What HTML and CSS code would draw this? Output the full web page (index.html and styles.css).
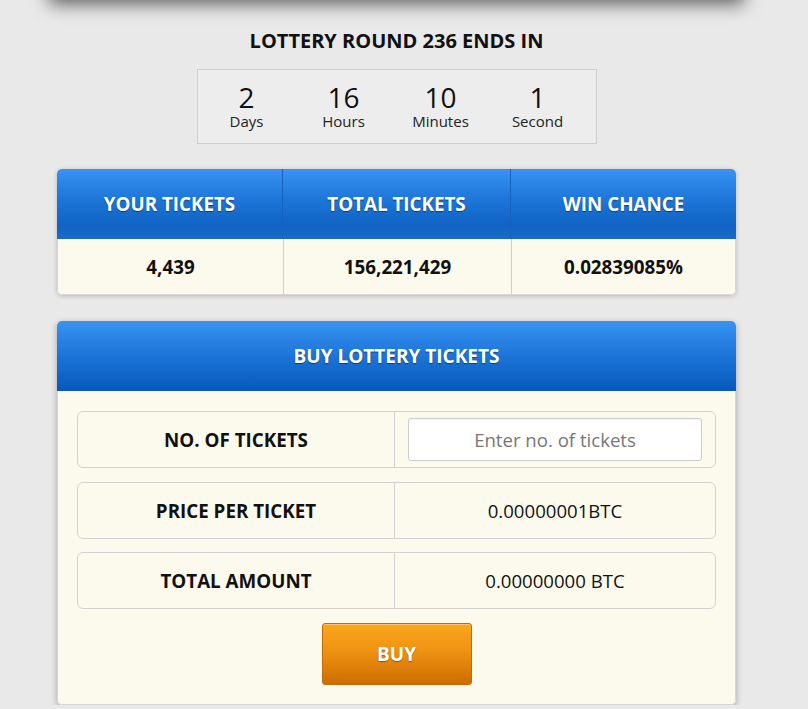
FILE: index.html
```html
<!DOCTYPE html>
<html>
<head>
<meta charset="utf-8">
<link rel="stylesheet" href="styles.css">
</head>
<body>
<div class="page">
  <div class="top-panel"></div>
  <h2 class="round-title">LOTTERY ROUND 236 ENDS IN</h2>
  <div class="countdown">
    <div class="cd-item"><span class="cd-num">2</span><span class="cd-label">Days</span></div>
    <div class="cd-item"><span class="cd-num">16</span><span class="cd-label">Hours</span></div>
    <div class="cd-item"><span class="cd-num">10</span><span class="cd-label">Minutes</span></div>
    <div class="cd-item"><span class="cd-num">1</span><span class="cd-label">Second</span></div>
  </div>

  <div class="card stats">
    <div class="stats-head">
      <div class="th">YOUR TICKETS</div>
      <div class="th">TOTAL TICKETS</div>
      <div class="th">WIN CHANCE</div>
    </div>
    <div class="stats-body">
      <div class="td">4,439</div>
      <div class="td">156,221,429</div>
      <div class="td">0.02839085%</div>
    </div>
  </div>

  <div class="card buy">
    <div class="buy-head">BUY LOTTERY TICKETS</div>
    <div class="buy-body">
      <div class="row">
        <div class="row-label">NO. OF TICKETS</div>
        <div class="row-value"><input class="ticket-input" type="text" placeholder="Enter no. of tickets"></div>
      </div>
      <div class="row">
        <div class="row-label">PRICE PER TICKET</div>
        <div class="row-value">0.00000001BTC</div>
      </div>
      <div class="row row-last">
        <div class="row-label">TOTAL AMOUNT</div>
        <div class="row-value">0.00000000 BTC</div>
      </div>
      <div class="btn-wrap"><button class="buy-btn">BUY</button></div>
    </div>
  </div>
</div>
</body>
</html>
```

FILE: styles.css
```css
html, body {
  margin: 0;
  padding: 0;
}
body {
  background: #e9e9e9;
  font-family: "Open Sans", "Liberation Sans", sans-serif;
  color: #111;
  overflow: hidden;
}
.page {
  width: 679px;
  margin-left: 57px;
}
.top-panel {
  height: 30px;
  margin: -30px 0 0 -8px;
  width: 695px;
  background: #f2f2f2;
  box-shadow: 0 4px 18px rgba(0, 0, 0, 0.6);
}
.round-title {
  margin: 29px 0 0;
  font-size: 20px;
  line-height: 24px;
  font-weight: 700;
  text-align: center;
  color: #111;
}
.countdown {
  margin: 16px 0 0 140px;
  width: 398px;
  border: 1px solid #cfcfcf;
  background: #ededed;
  display: grid;
  grid-template-columns: repeat(4, 97px);
  padding-top: 14px;
  box-sizing: content-box;
  height: 59px;
}
.cd-item {
  display: flex;
  flex-direction: column;
  align-items: center;
}
.cd-num {
  font-size: 28px;
  line-height: 26px;
  color: #111;
}
.cd-label {
  margin-top: 3px;
  font-size: 15px;
  line-height: 16px;
  color: #222;
}
.card {
  border-radius: 5px;
  box-shadow: 0 1px 5px rgba(0, 0, 0, 0.22);
  overflow: hidden;
  background: #fcfaec;
}
.stats {
  margin-top: 25px;
}
.stats-head, .stats-body {
  display: grid;
  grid-template-columns: 225px 228px 1fr;
}
.stats-head {
  height: 70px;
  background: linear-gradient(#3893f1 0%, #1f78db 40%, #0f63c3 80%, #1a6cc9 100%);
}
.th {
  display: flex;
  align-items: center;
  justify-content: center;
  color: #fff;
  font-size: 18.8px;
  font-weight: 700;
  text-shadow: 0 1px 1px rgba(0, 0, 0, 0.45);
}
.th + .th {
  border-left: 1px solid #1462bd;
}
.stats-body {
  height: 55px;
  border: 1px solid #d6d6d6;
  border-top: 0;
  border-radius: 0 0 5px 5px;
}
.td {
  display: flex;
  align-items: center;
  justify-content: center;
  font-size: 18.8px;
  font-weight: 700;
}
.td + .td {
  border-left: 1px solid #cfcfcf;
}
.buy {
  margin-top: 26px;
  box-shadow: 0 2px 6px rgba(0, 0, 0, 0.3);
}
.buy-head {
  height: 70px;
  display: flex;
  align-items: center;
  justify-content: center;
  background: linear-gradient(#3893f2 0%, #1c74d8 50%, #0559b9 100%);
  color: #fff;
  font-size: 19px;
  font-weight: 700;
  text-shadow: 0 1px 1px rgba(0, 0, 0, 0.45);
}
.buy-body {
  padding: 20px 19px 19px;
  border: 1px solid #d6d6d6;
  border-top: 0;
  border-radius: 0 0 5px 5px;
  display: flex;
  flex-direction: column;
  gap: 14px;
}
.row {
  height: 55px;
  border: 1px solid #d2d2d2;
  border-radius: 6px;
  display: grid;
  grid-template-columns: 317px 1fr;
}
.row-last {
  margin-top: -1px;
}
.row-label {
  display: flex;
  align-items: center;
  justify-content: center;
  font-size: 18.8px;
  font-weight: 700;
  border-right: 1px solid #d2d2d2;
}
.row-value {
  display: flex;
  align-items: center;
  justify-content: center;
  font-size: 18.6px;
  padding: 0 13px;
}
.ticket-input {
  width: 100%;
  height: 43px;
  box-sizing: border-box;
  border: 1px solid #cccccc;
  border-radius: 3px;
  background: #fff;
  font-family: "Open Sans", "Liberation Sans", sans-serif;
  font-size: 18.6px;
  text-align: center;
  color: #333;
  outline: none;
  box-shadow: inset 0 1px 1px rgba(0, 0, 0, 0.05);
}
.ticket-input::placeholder {
  color: #777;
}
.btn-wrap {
  display: flex;
  justify-content: center;
}
.buy-btn {
  width: 150px;
  height: 62px;
  border: 1px solid #c56a05;
  border-radius: 3px;
  background: linear-gradient(#fba71e, #ee9212 45%, #cd6d00);
  color: #fff;
  font-family: "Open Sans", "Liberation Sans", sans-serif;
  font-size: 19px;
  font-weight: 700;
  text-shadow: 0 1px 1px rgba(0, 0, 0, 0.35);
  box-shadow: inset 0 1px 0 rgba(255, 255, 255, 0.35);
  cursor: pointer;
}
```
